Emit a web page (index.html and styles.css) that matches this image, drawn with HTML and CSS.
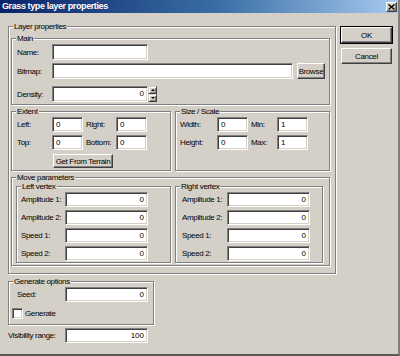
FILE: index.html
```html
<!DOCTYPE html>
<html>

<head>
    <title>Grass type layer properties</title>
    <meta charset="UTF-8">
    <link rel="stylesheet" href="styles.css">
</head>

<body>
    <div class="window">
        <div class="titlebar">
            <span class="title">Grass type layer properties</span>
            <span class="close">
                <svg width="7" height="6" viewBox="0 0 7 6"><path d="M0.5 0.5 L6.5 5.5 M6.5 0.5 L0.5 5.5" stroke="#000" stroke-width="1.4"/></svg>
            </span>
        </div>

        <div class="client">
            <div class="left-col">
                <div class="group layer">
                    <span class="legend">Layer properties</span>

                    <div class="group main">
                        <span class="legend">Main</span>
                        <div class="row">
                            <span class="lbl main-lbl">Name:</span>
                            <span class="field name"></span>
                        </div>
                        <div class="row row-bitmap">
                            <span class="lbl main-lbl">Bitmap:</span>
                            <span class="field bitmap"></span>
                            <span class="btn browse">Browse</span>
                        </div>
                        <div class="row row-density">
                            <span class="lbl main-lbl">Density:</span>
                            <span class="field num density">0</span>
                            <span class="spin">
                                <span class="spin-btn"><i class="arrow up"></i></span>
                                <span class="spin-btn"><i class="arrow down"></i></span>
                            </span>
                        </div>
                    </div>

                    <div class="pair">
                        <div class="group extent">
                            <span class="legend">Extent</span>
                            <div class="grid extent-grid">
                                <span class="lbl">Left:</span>
                                <span class="field small">0</span>
                                <span class="lbl pad">Right:</span>
                                <span class="field small">0</span>
                                <span class="lbl">Top:</span>
                                <span class="field small">0</span>
                                <span class="lbl pad">Bottom:</span>
                                <span class="field small">0</span>
                            </div>
                            <span class="btn terrain">Get From Terrain</span>
                        </div>
                        <div class="group size">
                            <span class="legend">Size / Scale</span>
                            <div class="grid size-grid">
                                <span class="lbl">Width:</span>
                                <span class="field small">0</span>
                                <span class="lbl pad">Min:</span>
                                <span class="field small">1</span>
                                <span class="lbl">Height:</span>
                                <span class="field small">0</span>
                                <span class="lbl pad">Max:</span>
                                <span class="field small">1</span>
                            </div>
                        </div>
                    </div>

                    <div class="group move">
                        <span class="legend">Move parameters</span>
                        <div class="group vertex left-vertex">
                            <span class="legend">Left vertex</span>
                            <div class="grid vertex-grid">
                                <span class="lbl">Amplitude 1:</span>
                                <span class="field num">0</span>
                                <span class="lbl">Amplitude 2:</span>
                                <span class="field num">0</span>
                                <span class="lbl">Speed 1:</span>
                                <span class="field num">0</span>
                                <span class="lbl">Speed 2:</span>
                                <span class="field num">0</span>
                            </div>
                        </div>
                        <div class="group vertex right-vertex">
                            <span class="legend">Right vertex</span>
                            <div class="grid vertex-grid">
                                <span class="lbl">Amplitude 1:</span>
                                <span class="field num">0</span>
                                <span class="lbl">Amplitude 2:</span>
                                <span class="field num">0</span>
                                <span class="lbl">Speed 1:</span>
                                <span class="field num">0</span>
                                <span class="lbl">Speed 2:</span>
                                <span class="field num">0</span>
                            </div>
                        </div>
                    </div>
                </div>

                <div class="group gen">
                    <span class="legend">Generate options</span>
                    <div class="row">
                        <span class="lbl seed-lbl">Seed:</span>
                        <span class="field num wide">0</span>
                    </div>
                    <div class="check-row">
                        <span class="checkbox"></span>
                        <span class="lbl">Generate</span>
                    </div>
                </div>

                <div class="row vis-row">
                    <span class="lbl vis-lbl">Visibility range:</span>
                    <span class="field num wide">100</span>
                </div>
            </div>

            <div class="buttons">
                <span class="btn dlg ok">OK</span>
                <span class="btn dlg">Cancel</span>
            </div>
        </div>
    </div>
</body>

</html>
```

FILE: styles.css
```css
body {
    margin: 0;
    font-family: "Liberation Sans", Arial, sans-serif;
    font-size: 8px;
    letter-spacing: -0.35px;
    color: #000;
    background: #d4d0c8;
}
.window {
    width: 400px;
    height: 356px;
    box-sizing: border-box;
    background: #d4d0c8;
    border-right: 2px solid #808080;
    border-bottom: 2px solid #5a5a5a;
    overflow: hidden;
}
.titlebar {
    height: 13px;
    display: flex;
    align-items: center;
    justify-content: space-between;
    padding: 0 1px 0 2px;
    background: linear-gradient(to right, #0a246a, #3a6ea5 55%, #a6caf0);
}
.title {
    color: #fff;
    font-weight: bold;
    font-size: 9px;
    letter-spacing: -0.4px;
    line-height: 13px;
}
.close {
    width: 11px;
    height: 10px;
    box-sizing: border-box;
    display: flex;
    align-items: center;
    justify-content: center;
    background: #d4d0c8;
    border: 1px solid;
    border-color: #fff #404040 #404040 #fff;
    box-shadow: inset -1px -1px 0 #808080;
}
.client {
    display: flex;
    padding: 13px 0 0 8px;
}
.left-col {
    width: 328px;
}

/* group boxes */
.group {
    position: relative;
    box-sizing: border-box;
    border: 1px solid #808080;
    box-shadow: inset 1px 1px 0 #fff, 1px 1px 0 #fff;
}
.legend {
    position: absolute;
    top: -5px;
    left: 4px;
    padding: 0 1px;
    line-height: 9px;
    background: #d4d0c8;
    white-space: nowrap;
}
.layer {
    width: 328px;
    height: 248px;
    padding: 11px 0 0 2px;
}
.main {
    width: 319px;
    height: 67px;
    padding: 5px 0 0 5px;
}
.pair {
    display: flex;
    gap: 4px;
    margin-top: 6px;
}
.extent {
    width: 160px;
    height: 60px;
    padding: 5px 0 0 5px;
}
.size {
    width: 155px;
    height: 60px;
    padding: 5px 0 0 4px;
}
.move {
    width: 319px;
    height: 89px;
    margin-top: 6px;
    padding: 8px 0 0 4px;
    display: flex;
    gap: 4px;
}
.vertex {
    height: 77px;
    padding: 5px 0 0 4px;
}
.left-vertex {
    width: 155px;
}
.right-vertex {
    width: 148px;
    padding-left: 6px;
}
.gen {
    width: 146px;
    height: 44px;
    margin-top: 7px;
    padding: 5px 0 0 4px;
}

/* rows and fields */
.row {
    display: flex;
    align-items: center;
}
.row-bitmap {
    margin-top: 3px;
}
.row-density {
    margin-top: 7px;
}
.lbl {
    white-space: nowrap;
}
.main-lbl {
    width: 35px;
}
.field {
    box-sizing: border-box;
    height: 16px;
    line-height: 14px;
    padding: 0 3px;
    background: #fff;
    border: 1px solid;
    border-color: #808080 #fff #fff #808080;
    box-shadow: inset 1px 1px 0 #404040, inset -1px -1px 0 #d4d0c8;
    letter-spacing: 0;
}
.num {
    text-align: right;
}
.name,
.density {
    width: 96px;
}
.bitmap {
    width: 241px;
}
.small {
    height: 15px;
    line-height: 13px;
}
.wide {
    width: 83px;
    height: 15px;
    line-height: 13px;
}
.grid {
    display: grid;
    grid-auto-rows: 15px;
    row-gap: 3px;
    align-items: center;
}
.extent-grid {
    grid-template-columns: 35px 31px 33px 31px;
}
.size-grid {
    grid-template-columns: 37px 31px 29px 31px;
}
.pad {
    padding-left: 3px;
}
.vertex-grid {
    grid-template-columns: 44px 83px;
}
.vertex-grid .field {
    height: 15px;
    line-height: 13px;
}
.right-vertex .vertex-grid {
    grid-template-columns: 45px 83px;
}

/* buttons */
.btn {
    box-sizing: border-box;
    display: flex;
    align-items: center;
    justify-content: center;
    background: #d4d0c8;
    border: 1px solid;
    border-color: #fff #404040 #404040 #fff;
    box-shadow: inset -1px -1px 0 #808080;
    white-space: nowrap;
}
.browse {
    width: 28px;
    height: 16px;
    margin-left: 4px;
}
.terrain {
    width: 60px;
    height: 14px;
    margin: 4px 0 0 36px;
}
.spin {
    display: flex;
    flex-direction: column;
    width: 9px;
    height: 16px;
}
.spin-btn {
    flex: 1;
    display: flex;
    align-items: center;
    justify-content: center;
    background: #d4d0c8;
    border: 1px solid;
    border-color: #d4d0c8 #404040 #404040 #d4d0c8;
    box-shadow: inset 1px 1px 0 #fff, inset -1px -1px 0 #808080;
}
.arrow {
    width: 0;
    height: 0;
    border-left: 2px solid transparent;
    border-right: 2px solid transparent;
}
.arrow.up {
    border-bottom: 2px solid #000;
}
.arrow.down {
    border-top: 2px solid #000;
}
.buttons {
    display: flex;
    flex-direction: column;
    gap: 5px;
    margin-left: 5px;
    padding-top: 1px;
}
.dlg {
    width: 51px;
    height: 16px;
}
.ok {
    outline: 1px solid #000;
    outline-offset: 0;
    border-color: #fff #404040 #404040 #fff;
}
.seed-lbl {
    width: 48px;
    padding-left: 4px;
}
.check-row {
    display: flex;
    align-items: center;
    margin-top: 6px;
}
.checkbox {
    box-sizing: border-box;
    width: 11px;
    height: 11px;
    margin: 0 2px 0 -1px;
    background: #fff;
    border: 1px solid;
    border-color: #808080 #fff #fff #808080;
    box-shadow: inset 1px 1px 0 #404040, inset -1px -1px 0 #d4d0c8;
}
.vis-row {
    margin-top: 3px;
}
.vis-lbl {
    width: 57px;
}
```
